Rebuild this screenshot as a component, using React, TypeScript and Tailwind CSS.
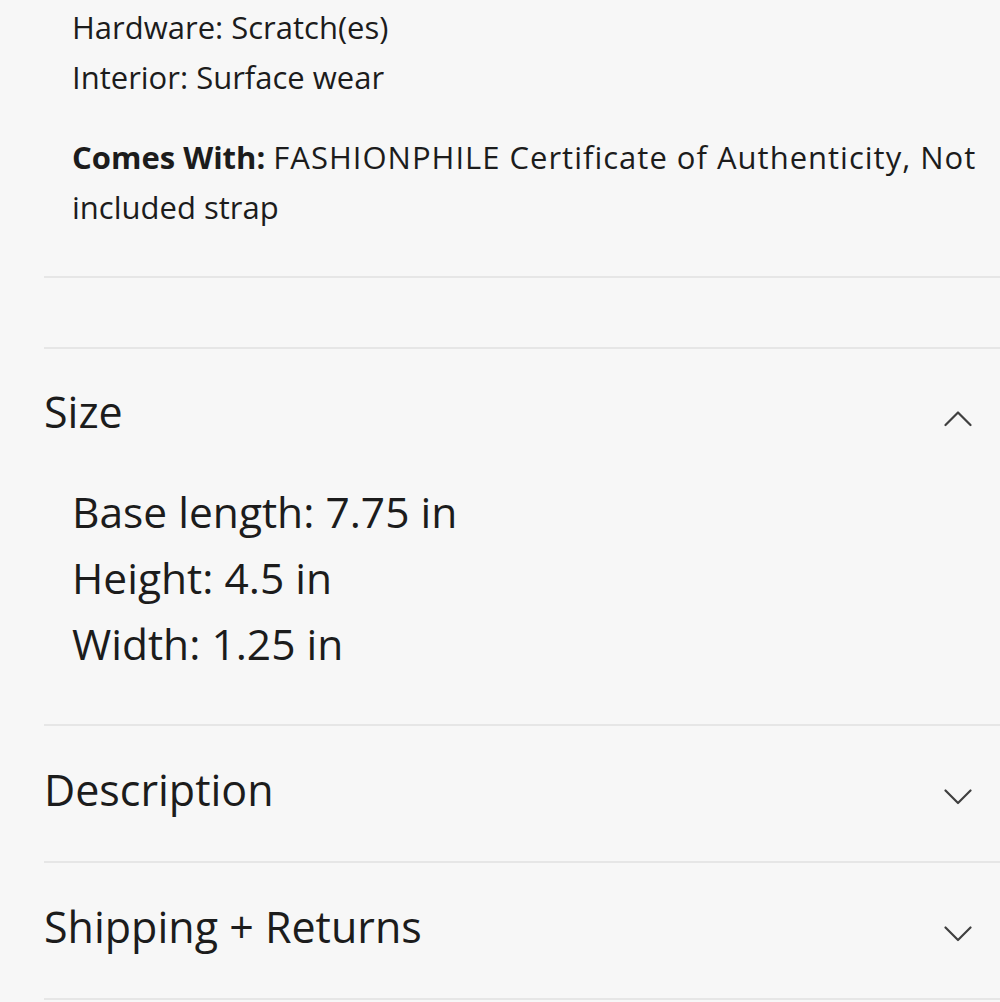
// Product details accordion (condition notes + Size / Description / Shipping)

function Chevron({ up }: { up?: boolean }) {
  return (
    <svg width="28" height="16" viewBox="0 0 28 16" fill="none" className="mt-[14px] shrink-0">
      <polyline
        points={up ? '1.5,14 14,1.5 26.5,14' : '1.5,1.5 14,14 26.5,1.5'}
        stroke="#404040"
        strokeWidth="2.2"
        strokeLinecap="round"
        strokeLinejoin="round"
      />
    </svg>
  )
}

function SectionHeader({ title, open }: { title: string; open?: boolean }) {
  return (
    <div className={`flex items-center justify-between pr-[28px] ${open ? 'pt-[34px] pb-0' : 'pt-[35px] pb-[43px]'}`}>
      <h3 className="text-[43px] font-normal leading-[57px] text-[#1c1c1c]">{title}</h3>
      <Chevron up={open} />
    </div>
  )
}

export default function App() {
  const sizes = ['Base length: 7.75 in', 'Height: 4.5 in', 'Width: 1.25 in']

  return (
    <div className="min-h-[1002px] bg-[#f7f7f7] pl-[44px] font-['Open_Sans',sans-serif] text-[#1c1c1c]">
      {/* Condition notes (tail of the previous section) */}
      <div className="border-b-2 border-[#e6e6e6] pb-[44px] pl-[28px] pt-[2px] text-[31px] leading-[50px]">
        <p>Hardware: Scratch(es)</p>
        <p>Interior: Surface wear</p>
        <p className="mt-[30px]">
          <span className="font-bold">Comes With:</span>{' '}
          <span className="tracking-[1px]">FASHIONPHILE Certificate of Authenticity, Not</span> included strap
        </p>
      </div>

      {/* empty row between the sections */}
      <div className="h-[71px] border-b-2 border-[#e6e6e6]" />

      {/* Size, expanded */}
      <div className="border-b-2 border-[#e6e6e6]">
        <SectionHeader title="Size" open />
        <ul className="pb-[47px] pl-[28px] pt-[39px] text-[42.5px] leading-[66px]">
          {sizes.map((s) => (
            <li key={s}>{s}</li>
          ))}
        </ul>
      </div>

      <div className="border-b-2 border-[#e6e6e6]">
        <SectionHeader title="Description" />
      </div>
      <div className="border-b-2 border-[#e6e6e6]">
        <SectionHeader title="Shipping + Returns" />
      </div>
    </div>
  )
}
